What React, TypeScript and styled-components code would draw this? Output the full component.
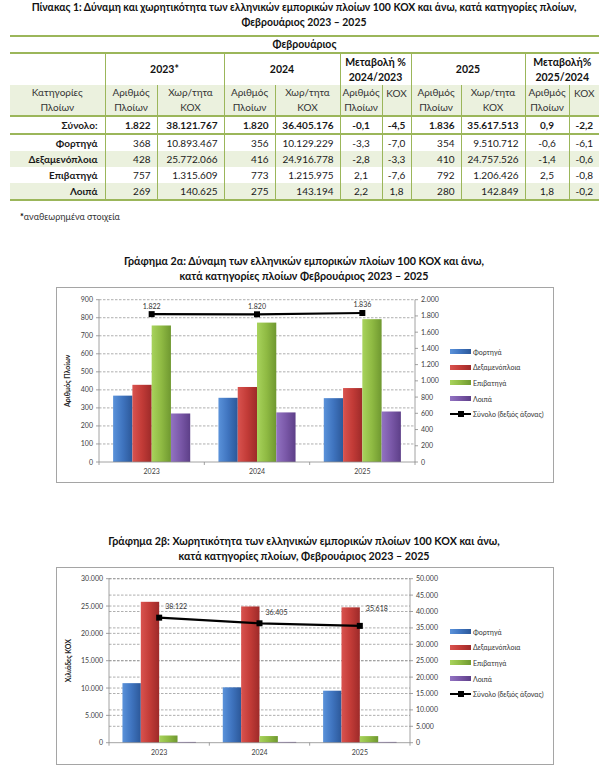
import React from 'react';
import styled, { createGlobalStyle } from 'styled-components';

const GREEN = '#9bb65a';
const SHADE = '#ebf1de';
const FONT = 'Lato, "Open Sans", "Noto Sans", sans-serif';

const GlobalStyle = createGlobalStyle`
  body {
    margin: 0;
    background: #ffffff;
    font-family: ${FONT};
    color: #111111;
  }
`;

const Page = styled.div`
  width: 608px;
`;

const Title = styled.div<{ $top?: number; $size?: number }>`
  margin-top: ${p => p.$top ?? 0}px;
  text-align: center;
  font-weight: bold;
  font-size: ${p => p.$size ?? 10.7}px;
  line-height: 14.5px;
  color: #111;
`;

const Table = styled.table`
  border-collapse: collapse;
  table-layout: fixed;
  width: 589px;
  margin: 6px 0 0 10px;
  font-size: 10px;
  border-top: 2px solid ${GREEN};
  border-bottom: 2px solid ${GREEN};
`;

const Row = styled.tr<{ $shade?: boolean; $line?: boolean }>`
  background: ${p => (p.$shade ? SHADE : '#ffffff')};
  border-bottom: ${p => (p.$line ? `2px solid ${GREEN}` : 'none')};
`;

const HeadCell = styled.th<{ $first?: boolean; $h: number }>`
  height: ${p => p.$h}px;
  padding: 0;
  font-weight: bold;
  font-size: 10.5px;
  line-height: 15px;
  text-align: center;
  border-left: ${p => (p.$first ? 'none' : `1px solid ${GREEN}`)};
`;

const SubCell = styled.td<{ $first?: boolean; $top?: boolean }>`
  height: 28px;
  padding: ${p => (p.$top ? '1px 0 0' : '0')};
  line-height: 15px;
  text-align: center;
  vertical-align: ${p => (p.$top ? 'top' : 'middle')};
  color: #333;
  white-space: nowrap;
  border-left: ${p => (p.$first ? 'none' : `1px solid ${GREEN}`)};
`;

const Cell = styled.td<{ $first?: boolean; $center?: boolean; $bold?: boolean }>`
  height: 16px;
  padding: 0 ${p => (p.$center ? 0 : p.$first ? 7 : 6)}px 0 0;
  text-align: ${p => (p.$center ? 'center' : 'right')};
  font-weight: ${p => (p.$bold || p.$first ? 'bold' : 'normal')};
  white-space: nowrap;
  color: #1a1a1a;
  border-left: ${p => (p.$first ? 'none' : `1px solid ${GREEN}`)};
`;

const Note = styled.div`
  margin: 10px 0 0 20px;
  font-size: 9px;
  line-height: 12px;
  color: #333;
  b {
    color: #000;
  }
`;

const ChartBox = styled.div<{ $h: number }>`
  box-sizing: border-box;
  width: 498px;
  height: ${p => p.$h}px;
  margin: 4px 0 0 56px;
  border: 1px solid #a5a5a5;
  display: flex;
  align-items: flex-start;
`;

const Legend = styled.div`
  margin: 56px 0 0 3px;
  display: flex;
  flex-direction: column;
`;

const LegendItem = styled.div`
  height: 15.6px;
  display: flex;
  align-items: center;
  gap: 2px;
  font-size: 7px;
  color: #333;
  white-space: nowrap;
`;

const Swatch = styled.span<{ $c: string[] }>`
  width: 21px;
  height: 5px;
  background: linear-gradient(to right, ${p => p.$c[0]}, ${p => p.$c[1]} 50%, ${p => p.$c[2]});
`;

const LineMark = styled.span`
  position: relative;
  width: 21px;
  height: 2px;
  background: #000;
  &::after {
    content: '';
    position: absolute;
    left: 8px;
    top: -2px;
    width: 6px;
    height: 6px;
    background: #000;
  }
`;

const PALETTE = [
  ['#5a92da', '#3f74bf', '#2c5899'],
  ['#d9534f', '#c23b37', '#9d2a29'],
  ['#a8d35c', '#8fba43', '#6f9830'],
  ['#9273c2', '#7a58a8', '#5d3f88'],
];
const NAMES = ['Φορτηγά', 'Δεξαμενόπλοια', 'Επιβατηγά', 'Λοιπά'];
const YEARS = ['2023', '2024', '2025'];

const fmt = (n: number) => n.toString().replace(/\B(?=(\d{3})+(?!\d))/g, '.');

type ChartCfg = {
  id: string;
  height: number;
  xL: number;
  xR: number;
  yT: number;
  yB: number;
  leftMax: number;
  leftStep: number;
  rightMax: number;
  rightStep: number;
  gridRight: boolean;
  data: number[][];
  totals: number[];
  labelDx: number;
  labelDy: number[];
  labelAnchor: 'middle' | 'start';
  yTitle: string;
  yTitleX: number;
};

function Chart({ cfg }: { cfg: ChartCfg }) {
  const { id, xL, xR, yT, yB, leftMax, leftStep, rightMax, rightStep } = cfg;
  const h = yB - yT;
  const cw = (xR - xL) / 3;
  const bw = cw * 0.183;
  const yL = (v: number) => yB - (v / leftMax) * h;
  const yR = (v: number) => yB - (v / rightMax) * h;

  const leftTicks: number[] = [];
  for (let v = 0; v <= leftMax; v += leftStep) leftTicks.push(v);
  const rightTicks: number[] = [];
  for (let v = 0; v <= rightMax; v += rightStep) rightTicks.push(v);

  const pts = cfg.totals.map((t, i) => ({ x: xL + cw * (i + 0.5), y: yR(t), t }));

  return (
    <svg width={390} height={cfg.height - 2} style={{ display: 'block', flex: 'none' }}>
      <defs>
        {PALETTE.map((c, i) => (
          <linearGradient key={i} id={`${id}g${i}`} x1="0" x2="1" y1="0" y2="0">
            <stop offset="0" stopColor={c[0]} />
            <stop offset="0.5" stopColor={c[1]} />
            <stop offset="1" stopColor={c[2]} />
          </linearGradient>
        ))}
      </defs>

      {leftTicks.slice(1).map(v => (
        <line key={`gl${v}`} x1={xL} x2={xR} y1={yL(v)} y2={yL(v)} stroke="#8c8c8c" strokeWidth={0.7} strokeDasharray="2.5 1.5" />
      ))}
      {cfg.gridRight &&
        rightTicks.slice(1).map(v => (
          <line key={`gr${v}`} x1={xL} x2={xR} y1={yR(v)} y2={yR(v)} stroke="#8c8c8c" strokeWidth={0.7} strokeDasharray="2.5 1.5" />
        ))}

      {cfg.data.map((grp, gi) =>
        grp.map((v, si) => {
          const x = xL + gi * cw + (cw - 4 * bw) / 2 + si * bw;
          return <rect key={`${gi}-${si}`} x={x} y={yL(v)} width={bw} height={yB - yL(v)} fill={`url(#${id}g${si})`} />;
        })
      )}

      <g stroke="#8a8a8a" strokeWidth={0.8}>
        <line x1={xL} x2={xL} y1={yT} y2={yB} />
        <line x1={xR} x2={xR} y1={yT} y2={yB} />
        <line x1={xL} x2={xR} y1={yB} y2={yB} />
        {leftTicks.map(v => (
          <line key={`tl${v}`} x1={xL - 3} x2={xL} y1={yL(v)} y2={yL(v)} />
        ))}
        {rightTicks.map(v => (
          <line key={`tr${v}`} x1={xR} x2={xR + 3} y1={yR(v)} y2={yR(v)} />
        ))}
        {[0, 1, 2, 3].map(i => (
          <line key={`tb${i}`} x1={xL + i * cw} x2={xL + i * cw} y1={yB} y2={yB + 3} />
        ))}
      </g>

      <g fontFamily={FONT} fontSize={7} fill="#404040">
        {leftTicks.map(v => (
          <text key={`ll${v}`} x={xL - 6} y={yL(v) + 2.5} textAnchor="end">
            {fmt(v)}
          </text>
        ))}
        {rightTicks.map(v => (
          <text key={`rl${v}`} x={xR + 6} y={yR(v) + 2.5}>
            {fmt(v)}
          </text>
        ))}
        {YEARS.map((y, i) => (
          <text key={y} x={xL + cw * (i + 0.5)} y={yB + 12} textAnchor="middle">
            {y}
          </text>
        ))}
      </g>

      <text
        x={cfg.yTitleX}
        y={(yT + yB) / 2}
        transform={`rotate(-90 ${cfg.yTitleX} ${(yT + yB) / 2})`}
        textAnchor="middle"
        dominantBaseline="middle"
        fontFamily={FONT}
        fontSize={7}
        fontWeight="bold"
        fill="#222"
      >
        {cfg.yTitle}
      </text>

      <polyline points={pts.map(p => `${p.x},${p.y}`).join(' ')} fill="none" stroke="#000" strokeWidth={2.2} />
      {pts.map((p, i) => (
        <g key={`m${i}`}>
          <rect x={p.x - 3} y={p.y - 3} width={6} height={6} fill="#000" />
          <text
            x={p.x + cfg.labelDx}
            y={p.y + cfg.labelDy[i]}
            textAnchor={cfg.labelAnchor}
            fontFamily={FONT}
            fontSize={7}
            fill="#333"
          >
            {fmt(p.t)}
          </text>
        </g>
      ))}
    </svg>
  );
}

function ChartLegend() {
  return (
    <Legend>
      {NAMES.map((n, i) => (
        <LegendItem key={n}>
          <Swatch $c={PALETTE[i]} />
          {n}
        </LegendItem>
      ))}
      <LegendItem>
        <LineMark />
        Σύνολο (δεξιός άξονας)
      </LegendItem>
    </Legend>
  );
}

const chartA: ChartCfg = {
  id: 'a',
  height: 196,
  xL: 42,
  xR: 358,
  yT: 11.7,
  yB: 174,
  leftMax: 900,
  leftStep: 100,
  rightMax: 2000,
  rightStep: 200,
  gridRight: false,
  data: [
    [368, 428, 757, 269],
    [356, 416, 773, 275],
    [354, 410, 792, 280],
  ],
  totals: [1822, 1820, 1836],
  labelDx: 0,
  labelDy: [-5.5, -5.5, -6],
  labelAnchor: 'middle',
  yTitle: 'Αριθμός Πλοίων',
  yTitleX: 11,
};

const chartB: ChartCfg = {
  id: 'b',
  height: 198,
  xL: 52,
  xR: 353,
  yT: 10.7,
  yB: 174.7,
  leftMax: 30000,
  leftStep: 5000,
  rightMax: 50000,
  rightStep: 5000,
  gridRight: true,
  data: [
    [10893, 25772, 1316, 141],
    [10129, 24917, 1216, 143],
    [9511, 24758, 1206, 143],
  ],
  totals: [38122, 36405, 35618],
  labelDx: 6,
  labelDy: [-9, -8.5, -15],
  labelAnchor: 'start',
  yTitle: 'Χιλιάδες ΚΟΧ',
  yTitleX: 12,
};

const BODY = [
  ['Σύνολο:', '1.822', '38.121.767', '1.820', '36.405.176', '-0,1', '-4,5', '1.836', '35.617.513', '0,9', '-2,2'],
  ['Φορτηγά', '368', '10.893.467', '356', '10.129.229', '-3,3', '-7,0', '354', '9.510.712', '-0,6', '-6,1'],
  ['Δεξαμενόπλοια', '428', '25.772.066', '416', '24.916.778', '-2,8', '-3,3', '410', '24.757.526', '-1,4', '-0,6'],
  ['Επιβατηγά', '757', '1.315.609', '773', '1.215.975', '2,1', '-7,6', '792', '1.206.426', '2,5', '-0,8'],
  ['Λοιπά', '269', '140.625', '275', '143.194', '2,2', '1,8', '280', '142.849', '1,8', '-0,2'],
];
const WIDTHS = [95, 52, 67, 51, 65, 42, 29, 50, 64, 44, 30];
const CENTERED = [5, 6, 9, 10];

export default function App() {
  return (
    <Page>
      <GlobalStyle />
      <Title $size={10.4}>
        Πίνακας 1: Δύναμη και χωρητικότητα των ελληνικών εμπορικών πλοίων 100 ΚΟΧ και άνω, κατά κατηγορίες πλοίων,
        <br />
        Φεβρουάριος 2023 – 2025
      </Title>

      <Table>
        <colgroup>
          {WIDTHS.map((w, i) => (
            <col key={i} style={{ width: w }} />
          ))}
        </colgroup>
        <thead>
          <Row $line>
            <HeadCell $first $h={15} colSpan={11}>
              Φεβρουάριος
            </HeadCell>
          </Row>
          <Row>
            <HeadCell $first $h={31} />
            <HeadCell $h={31} colSpan={2}>2023*</HeadCell>
            <HeadCell $h={31} colSpan={2}>2024</HeadCell>
            <HeadCell $h={31} colSpan={2}>
              Μεταβολή %<br />2024/2023
            </HeadCell>
            <HeadCell $h={31} colSpan={2}>2025</HeadCell>
            <HeadCell $h={31} colSpan={2}>
              Μεταβολή%<br />2025/2024
            </HeadCell>
          </Row>
          <Row $shade $line>
            <SubCell $first>
              Κατηγορίες<br />Πλοίων
            </SubCell>
            <SubCell>Αριθμός<br />Πλοίων</SubCell>
            <SubCell>Χωρ/τητα<br />ΚΟΧ</SubCell>
            <SubCell>Αριθμός<br />Πλοίων</SubCell>
            <SubCell>Χωρ/τητα<br />ΚΟΧ</SubCell>
            <SubCell>Αριθμός<br />Πλοίων</SubCell>
            <SubCell $top>ΚΟΧ</SubCell>
            <SubCell>Αριθμός<br />Πλοίων</SubCell>
            <SubCell>Χωρ/τητα<br />ΚΟΧ</SubCell>
            <SubCell>Αριθμός<br />Πλοίων</SubCell>
            <SubCell $top>ΚΟΧ</SubCell>
          </Row>
        </thead>
        <tbody>
          {BODY.map((r, ri) => (
            <Row key={r[0]} $shade={ri === 2 || ri === 4} $line={ri === 0}>
              {r.map((v, ci) => (
                <Cell key={ci} $first={ci === 0} $center={CENTERED.includes(ci)} $bold={ri === 0}>
                  {v}
                </Cell>
              ))}
            </Row>
          ))}
        </tbody>
      </Table>

      <Note>
        <b>*</b>αναθεωρημένα στοιχεία
      </Note>

      <Title $top={31}>
        Γράφημα 2α: Δύναμη των ελληνικών εμπορικών πλοίων 100 ΚΟΧ και άνω,
        <br />
        κατά κατηγορίες πλοίων Φεβρουάριος 2023 – 2025
      </Title>
      <ChartBox $h={chartA.height}>
        <Chart cfg={chartA} />
        <ChartLegend />
      </ChartBox>

      <Title $top={51}>
        Γράφημα 2β: Χωρητικότητα των ελληνικών εμπορικών πλοίων 100 ΚΟΧ και άνω,
        <br />
        κατά κατηγορίες πλοίων, Φεβρουάριος 2023 – 2025
      </Title>
      <ChartBox $h={chartB.height}>
        <Chart cfg={chartB} />
        <ChartLegend />
      </ChartBox>
    </Page>
  );
}
